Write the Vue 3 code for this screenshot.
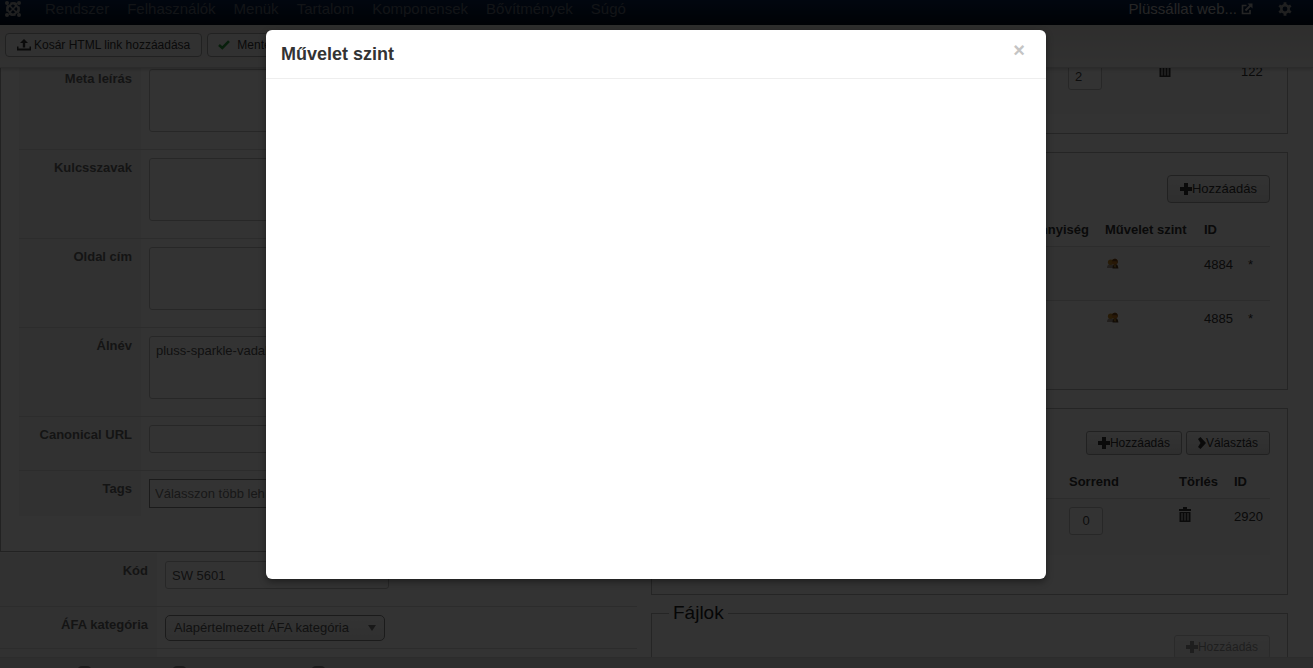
<script setup>
import { ref } from 'vue'

const menu = ['Rendszer', 'Felhasználók', 'Menük', 'Tartalom', 'Komponensek', 'Bővítmények', 'Súgó']

const metaFields = ref([
  { id: 'meta-description', label: 'Meta leírás', type: 'area', value: '' },
  { id: 'keywords', label: 'Kulcsszavak', type: 'area', value: '' },
  { id: 'page-title', label: 'Oldal cím', type: 'area', value: '' },
  { id: 'alias', label: 'Álnév', type: 'area', value: 'pluss-sparkle-vadal' },
  { id: 'canonical', label: 'Canonical URL', type: 'text', value: '' },
  { id: 'tags', label: 'Tags', type: 'tags', value: 'Válasszon több leh' }
])

const code = ref('SW 5601')
const prices = [{ id: 4884 }, { id: 4885 }]
</script>

<template>
  <div class="page">
    <nav class="navbar">
      <a href="#" class="brand" aria-label="Joomla">
        <svg width="18" height="18" viewBox="0 0 18 18" fill="none" stroke="currentColor" stroke-width="2">
          <path d="M3.500 11.500C2.800 9.500 3.300 8 4.500 6.800L6.800 4.500C8.500 2.800 11.500 2.500 13 4.500" />
          <path d="M6.500 3.500C8.500 2.800 10 3.300 11.200 4.500L13.500 6.800C15.200 8.500 15.500 11.500 13.500 13" />
          <path d="M14.500 6.500C15.200 8.500 14.700 10 13.500 11.200L11.200 13.500C9.500 15.200 6.500 15.500 5 13.500" />
          <path d="M11.500 14.500C9.500 15.200 8 14.700 6.800 13.500L4.500 11.200C2.800 9.500 2.500 6.500 4.500 5" />
          <path d="M5.500 5.500L12.500 12.500M12.500 5.500L5.500 12.500" stroke-width="1.600" />
          <g fill="currentColor" stroke="none"><circle cx="3" cy="3" r="2" /><circle cx="15" cy="3" r="2" /><circle cx="3" cy="15" r="2" /><circle cx="15" cy="15" r="2" /></g>
        </svg>
      </a>
      <a v-for="item in menu" :key="item" href="#" class="menu-link">{{ item }}</a>
      <a href="#" class="site-link">Plüssállat web...
        <svg width="12" height="12" viewBox="0 0 12 12" fill="none" stroke="currentColor" stroke-width="1.600">
          <path d="M5.500 2.500H1.500V10.500H9V7" /><path d="M4.500 7.500L9.500 2.500" stroke-width="2" /><path d="M6.500 0.500H11.500V5.500Z" fill="currentColor" stroke="none" />
        </svg>
      </a>
      <button class="gear" type="button" aria-label="Beállítások">
        <svg width="14" height="14" viewBox="0 0 14 14" fill="none" stroke="currentColor">
          <circle cx="7" cy="7" r="3.700" stroke-width="2.600" />
          <path d="M7 0.300V3M7 11V13.700M1.200 3.650L3.500 5M10.500 9L12.800 10.350M1.200 10.350L3.500 9M10.500 5L12.800 3.650" stroke-width="2.800" />
        </svg>
      </button>
    </nav>

    <div class="subhead">
      <button class="btn tool" type="button">
        <svg width="14" height="12" viewBox="0 0 14 12" fill="currentColor"><path d="M7 0L11 4H8.200V8.500H5.800V4H3ZM0 7.500H1.500V9.500H12.500V7.500H14V11.500H0Z" /></svg>
        Kosár HTML link hozzáadása
      </button>
      <button class="btn tool save" type="button">
        <svg class="check" width="12" height="10" viewBox="0 0 12 10" fill="none" stroke="currentColor" stroke-width="2.600"><path d="M1 5L4.300 8L11 1.200" /></svg>
        Mentés
      </button>
    </div>

    <main class="content">
      <div class="column">
        <div class="panel">
          <div class="form">
            <div v-for="f in metaFields" :key="f.id" class="row" :class="f.type">
              <label :for="f.id">{{ f.label }}</label>
              <div class="field">
                <textarea v-if="f.type === 'area'" :id="f.id" v-model="f.value"></textarea>
                <input v-else :id="f.id" v-model="f.value" type="text" />
              </div>
            </div>
          </div>
        </div>
        <div class="form outer">
          <div class="row text">
            <label for="code">Kód</label>
            <div class="field"><input id="code" v-model="code" type="text" /></div>
          </div>
          <div class="row choice">
            <label for="tax">ÁFA kategória</label>
            <div class="field">
              <div class="select">
                <select id="tax"><option>Alapértelmezett ÁFA kategória</option></select>
                <svg width="8" height="6" viewBox="0 0 8 6" fill="currentColor"><path d="M0 0H8L4 6Z" /></svg>
              </div>
            </div>
          </div>
          <div class="row last"><span class="stub"></span><div class="field"></div></div>
        </div>
      </div>

      <div class="column">
        <fieldset class="related">
          <table>
            <tbody>
              <tr>
                <td></td>
                <td class="c-order"><input type="text" value="2" aria-label="Sorrend" /></td>
                <td class="c-bin">
                  <button class="bin" type="button" aria-label="Törlés"><svg width="12" height="15" viewBox="0 0 12 15" fill="currentColor"><path d="M4 0H8V2H12V4H0V2H4ZM0.500 5H11.500V15H0.500ZM2.500 6V13.500H3.500V6ZM5.500 6V13.500H6.500V6ZM8.500 6V13.500H9.500V6Z" fill-rule="evenodd" /></svg></button>
                </td>
                <td class="c-num">122</td>
              </tr>
            </tbody>
          </table>
        </fieldset>

        <fieldset class="prices">
          <div class="actions">
            <button class="btn" type="button">
              <svg width="12" height="12" viewBox="0 0 12 12" fill="currentColor"><path d="M4 0H8V4H12V8H8V12H4V8H0V4H4Z" /></svg>Hozzáadás
            </button>
          </div>
          <table>
            <thead>
              <tr><th class="qty">Mennyiség</th><th class="c-level">Művelet szint</th><th class="c-id">ID</th><th class="c-star"></th></tr>
            </thead>
            <tbody>
              <tr v-for="p in prices" :key="p.id">
                <td></td>
                <td>
                  <button class="bin people" type="button" aria-label="Művelet szint">
                    <svg width="13" height="11" viewBox="0 0 14 12">
                      <path d="M1 11C1 8 2.500 6.500 5 6.500S8.500 8 8.500 11Z" fill="#a89c90" /><path d="M7 11.500C7 8 8 6.500 10 6.500S13 8 13.500 11.500Z" fill="#5a3d22" />
                      <circle cx="5" cy="4.500" r="3" fill="#c88c28" /><circle cx="9.500" cy="4" r="3.300" fill="#c87a20" />
                      <path d="M6.500 3.500C7 0.500 11 -0.500 12.500 3V6L11.500 3.500Z" fill="#7a481c" /><path d="M8 8L10 11L11 8Z" fill="#c99c38" />
                    </svg>
                  </button>
                </td>
                <td>{{ p.id }}</td>
                <td>*</td>
              </tr>
            </tbody>
          </table>
        </fieldset>

        <fieldset class="images">
          <div class="actions">
            <button class="btn small" type="button">
              <svg width="12" height="12" viewBox="0 0 12 12" fill="currentColor"><path d="M4 0H8V4H12V8H8V12H4V8H0V4H4Z" /></svg>Hozzáadás
            </button>
            <button class="btn small" type="button">
              <svg width="8" height="12" viewBox="0 0 8 12" fill="currentColor"><path d="M0 2L2.500 0L8 6L2.500 12L0 10L2.500 6Z" /></svg>Választás
            </button>
          </div>
          <table>
            <thead>
              <tr><th></th><th class="c-sort">Sorrend</th><th class="c-del">Törlés</th><th class="c-id">ID</th></tr>
            </thead>
            <tbody>
              <tr>
                <td></td>
                <td><input class="centered" type="text" value="0" aria-label="Sorrend" /></td>
                <td>
                  <button class="bin" type="button" aria-label="Törlés"><svg width="12" height="15" viewBox="0 0 12 15" fill="currentColor"><path d="M4 0H8V2H12V4H0V2H4ZM0.500 5H11.500V15H0.500ZM2.500 6V13.500H3.500V6ZM5.500 6V13.500H6.500V6ZM8.500 6V13.500H9.500V6Z" fill-rule="evenodd" /></svg></button>
                </td>
                <td>2920</td>
              </tr>
            </tbody>
          </table>
        </fieldset>

        <fieldset class="files">
          <legend>Fájlok</legend>
          <div class="actions">
            <button class="btn small faded" type="button">
              <svg width="12" height="12" viewBox="0 0 12 12" fill="currentColor"><path d="M4 0H8V4H12V8H8V12H4V8H0V4H4Z" /></svg>Hozzáadás
            </button>
          </div>
        </fieldset>
      </div>
    </main>

    <footer class="status"><i></i><i></i><i></i></footer>

    <div class="backdrop">
      <section class="modal" role="dialog" aria-labelledby="modal-title">
        <header>
          <h3 id="modal-title">Művelet szint</h3>
          <button class="close" type="button" aria-label="Bezárás">×</button>
        </header>
        <div class="modal-body"></div>
      </section>
    </div>
  </div>
</template>

<style>
body { margin: 0; background: #fff; }
</style>

<style scoped>
* { box-sizing: border-box; }
.page {
  position: relative;
  display: flex;
  flex-direction: column;
  height: 100vh;
  overflow: hidden;
  background: #fff;
  color: #333;
  font: 13px/18px "Liberation Sans", Arial, sans-serif;
}
button, input, select, textarea { font: inherit; color: inherit; }
svg { display: block; flex: none; }

.navbar {
  flex: none;
  display: flex;
  align-items: center;
  gap: 18px;
  height: 25px;
  padding: 0 21px 7px 4px;
  background: linear-gradient(#07224c, #000a1c);
  font-size: 15px;
  z-index: 2;
}
.navbar a { color: #5c6572; text-decoration: none; }
.navbar .brand { color: #a0a0a0; margin-right: 5px; }
.navbar .site-link { display: flex; align-items: center; gap: 4px; margin-left: auto; color: #bbb; }
.gear { padding: 0; margin-left: 7px; border: 0; background: none; color: #a0a0a0; }

.subhead {
  flex: none;
  display: flex;
  gap: 5px;
  height: 43px;
  padding: 8px 5px;
  background: linear-gradient(#e6e3e0, #f5f5f5);
  border-bottom: 1px solid #d8d8d8;
  box-shadow: 0 1px 4px rgba(0, 0, 0, .25);
  z-index: 1;
}
.btn {
  display: flex;
  align-items: center;
  height: 28px;
  padding: 0 12px;
  border: 1px solid #a4a4a4;
  border-radius: 4px;
  background: linear-gradient(#fff, #e6e6e6);
  white-space: nowrap;
}
.btn.tool { gap: 3px; height: 24px; padding: 0 11px; background: #f5f5f5; font-size: 12px; }
.btn.save { gap: 7px; padding-left: 10px; }
.btn.small { height: 24px; padding: 0 11px; border-radius: 3px; font-size: 12px; }
.btn.faded { opacity: .5; }
.check { color: #2a9c3c; }

.content {
  display: grid;
  grid-template-columns: minmax(0, 1fr) minmax(0, 1fr);
  gap: 14px;
  margin-top: -8px;
  padding-right: 25px;
}
.panel { padding: 0 18px 35px; border: 1px solid #aaa; border-top: 0; }
.row { display: flex; border-top: 1px solid #ddd; }
.row label, .stub {
  flex: none;
  width: 122px;
  padding: 9px 9px 0 0;
  background: #f5f5f5;
  color: #666;
  font-weight: bold;
  text-align: right;
}
.outer label, .stub { width: 157px; }
.outer .row:first-child { border-top-color: transparent; }
.field { flex: 1; padding: 8px 8px 0; }
.area { height: 89px; }
.text { height: 54px; }
.tags { height: 46px; }
.choice { height: 42px; }
.last { height: 40px; }
textarea, input {
  display: block;
  width: 224px;
  height: 28px;
  margin: 0;
  padding: 4px 6px;
  border: 1px solid #c4c4c4;
  border-radius: 3px;
  background: #fff;
  color: #555;
}
textarea { height: 63px; padding-top: 5px; resize: none; }
.tags input { height: 29px; border: 1px solid #888; border-radius: 0; padding-left: 5px; color: #777; }
.select { position: relative; width: 220px; }
.select select {
  display: block;
  width: 100%;
  height: 26px;
  padding: 0 8px;
  appearance: none;
  border: 1px solid #888;
  border-radius: 5px;
  background: linear-gradient(#fff, #eee);
  color: #555;
}
.select svg { position: absolute; right: 9px; top: 10px; color: #777; }

fieldset { min-width: 0; margin: 0 0 18px; padding: 22px 17px 0; border: 1px solid #bbb; }
.related { height: 74px; padding-top: 0; border-top: 0; }
.prices { height: 238px; }
.images { height: 187px; margin-bottom: 6px; }
.files { height: 110px; padding-top: 10px; }
legend { padding: 0 4px; color: #222; font-size: 19px; line-height: 24px; }
.actions { display: flex; justify-content: flex-end; gap: 4px; }
table { width: 100%; table-layout: fixed; border-collapse: collapse; }
th, td { padding: 8px 0 0 8px; text-align: left; vertical-align: top; line-height: 20px; }
th { height: 43px; padding-top: 17px; white-space: nowrap; }
th.qty { padding-right: 8px; text-align: right; }
td { height: 54px; border-top: 1px solid #ddd; }
tbody tr:nth-child(odd) td { background: #f9f9f9; }
.related tbody td { padding-top: 2px; border: 0; background: none; }
.images td { height: 57px; }
td input { width: 34px; color: #444; }
td input.centered { text-align: center; padding: 0; }
.c-order { width: 91px; }
.c-bin { width: 82px; }
.c-num { width: 37px; }
.c-level { width: 99px; }
.c-id { width: 44px; }
.c-star { width: 30px; }
.images .c-sort { width: 110px; }
.images .c-del { width: 55px; }
.bin { display: block; padding: 0; border: 0; background: none; }
.people { padding: 3px 0 0 1px; }

.status {
  position: absolute;
  inset: auto 0 0;
  display: flex;
  gap: 80px;
  height: 11px;
  padding: 8px 0 0 77px;
  overflow: hidden;
  background: #e6e3e3;
  border-top: 1px solid #ddd;
}
.status i { flex: none; width: 15px; height: 14px; border-radius: 5px; background: #888; }
.status i:last-child { margin-left: 44px; }

.backdrop {
  position: absolute;
  inset: 0;
  z-index: 10;
  display: flex;
  justify-content: center;
  align-items: flex-start;
  padding: 30px 1px 0 0;
  background: rgba(0, 0, 0, .8);
}
.modal {
  width: 780px;
  border-radius: 6px;
  background: #fff;
  box-shadow: 0 3px 7px rgba(0, 0, 0, .4);
}
.modal header {
  display: flex;
  justify-content: space-between;
  align-items: flex-start;
  height: 49px;
  padding: 9px 21px 0 15px;
  border-bottom: 1px solid #eee;
}
h3 { margin: 0; font-size: 18px; line-height: 30px; }
.close { padding: 0; border: 0; background: none; color: #c4c4c4; font-size: 20px; font-weight: bold; line-height: 22px; }
.modal-body { height: 500px; }
</style>
